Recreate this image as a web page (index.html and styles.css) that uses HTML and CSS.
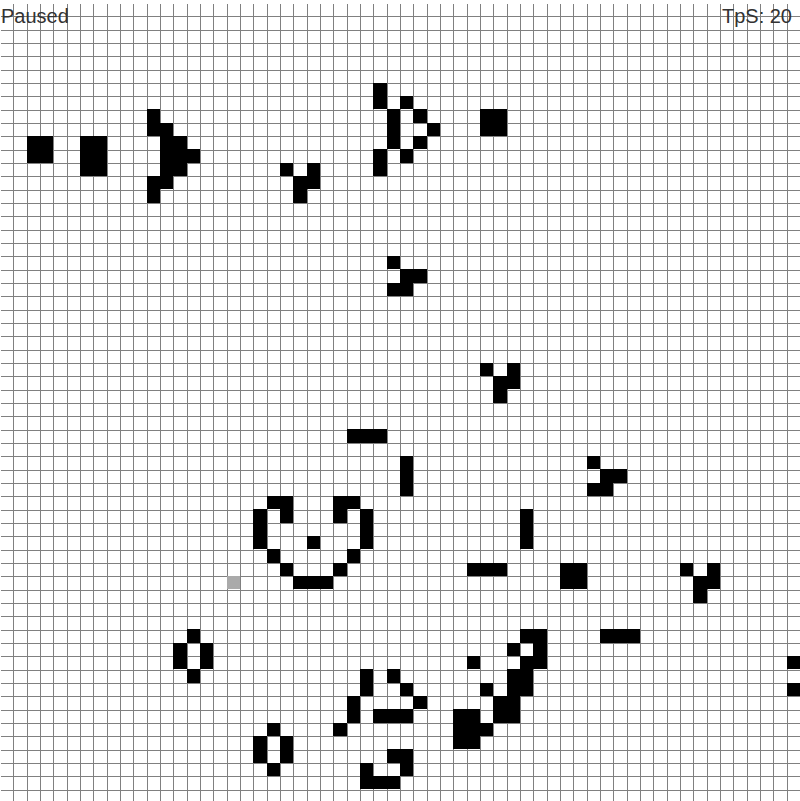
FILE: index.html
```html
<!DOCTYPE html>
<html lang="en">
  <head>
    <meta charset="UTF-8" />
    <meta name="viewport" content="width=device-width, initial-scale=1.0" />
    <title>Game of Life</title>
    <link rel="stylesheet" href="styles.css">
  </head>
  <body>
    <div class="game">
      <div class="hud">
        <span id="status">Paused</span>
        <span id="tps">TpS: 20</span>
      </div>

      <div id="board" class="board">
        <!-- blocks and the ship on the left -->
        <div class="cell" style="grid-area: 11 / 3 / span 2 / span 2"></div>
        <div class="cell" style="grid-area: 11 / 7 / span 3 / span 2"></div>
        <div class="cell" style="grid-area: 9 / 12"></div>
        <div class="cell" style="grid-area: 10 / 12 / span 1 / span 2"></div>
        <div class="cell" style="grid-area: 11 / 13 / span 1 / span 2"></div>
        <div class="cell" style="grid-area: 12 / 13 / span 1 / span 3"></div>
        <div class="cell" style="grid-area: 13 / 13 / span 1 / span 2"></div>
        <div class="cell" style="grid-area: 14 / 12 / span 1 / span 2"></div>
        <div class="cell" style="grid-area: 15 / 12"></div>

        <!-- top middle -->
        <div class="cell" style="grid-area: 7 / 29 / span 2"></div>
        <div class="cell" style="grid-area: 8 / 31"></div>
        <div class="cell" style="grid-area: 9 / 30 / span 3"></div>
        <div class="cell" style="grid-area: 9 / 32"></div>
        <div class="cell" style="grid-area: 10 / 33"></div>
        <div class="cell" style="grid-area: 11 / 32"></div>
        <div class="cell" style="grid-area: 12 / 29 / span 2"></div>
        <div class="cell" style="grid-area: 12 / 31"></div>
        <div class="cell" style="grid-area: 9 / 37 / span 2 / span 2"></div>

        <div class="cell" style="grid-area: 13 / 22"></div>
        <div class="cell" style="grid-area: 13 / 24"></div>
        <div class="cell" style="grid-area: 14 / 23 / span 1 / span 2"></div>
        <div class="cell" style="grid-area: 15 / 23"></div>

        <div class="cell" style="grid-area: 20 / 30"></div>
        <div class="cell" style="grid-area: 21 / 31 / span 1 / span 2"></div>
        <div class="cell" style="grid-area: 22 / 30 / span 1 / span 2"></div>

        <div class="cell" style="grid-area: 28 / 37"></div>
        <div class="cell" style="grid-area: 28 / 39"></div>
        <div class="cell" style="grid-area: 29 / 38 / span 1 / span 2"></div>
        <div class="cell" style="grid-area: 30 / 38"></div>

        <!-- blinkers and gliders in the middle -->
        <div class="cell" style="grid-area: 33 / 27 / span 1 / span 3"></div>
        <div class="cell" style="grid-area: 35 / 31 / span 3"></div>
        <div class="cell" style="grid-area: 35 / 45"></div>
        <div class="cell" style="grid-area: 36 / 46 / span 1 / span 2"></div>
        <div class="cell" style="grid-area: 37 / 45 / span 1 / span 2"></div>

        <!-- the face -->
        <div class="cell" style="grid-area: 38 / 21 / span 1 / span 2"></div>
        <div class="cell" style="grid-area: 38 / 26 / span 1 / span 2"></div>
        <div class="cell" style="grid-area: 39 / 22"></div>
        <div class="cell" style="grid-area: 39 / 26"></div>
        <div class="cell" style="grid-area: 39 / 20 / span 3"></div>
        <div class="cell" style="grid-area: 39 / 28 / span 3"></div>
        <div class="cell" style="grid-area: 41 / 24"></div>
        <div class="cell" style="grid-area: 42 / 21"></div>
        <div class="cell" style="grid-area: 42 / 27"></div>
        <div class="cell" style="grid-area: 43 / 22"></div>
        <div class="cell" style="grid-area: 43 / 26"></div>
        <div class="cell" style="grid-area: 44 / 23 / span 1 / span 3"></div>

        <div class="cell" style="grid-area: 39 / 40 / span 3"></div>
        <div class="cell" style="grid-area: 43 / 36 / span 1 / span 3"></div>
        <div class="cell" style="grid-area: 43 / 43 / span 2 / span 2"></div>
        <div class="cell" style="grid-area: 43 / 52"></div>
        <div class="cell" style="grid-area: 43 / 54"></div>
        <div class="cell" style="grid-area: 44 / 53 / span 1 / span 2"></div>
        <div class="cell" style="grid-area: 45 / 53"></div>

        <!-- mouse hover -->
        <div class="cell hover" style="grid-area: 44 / 18"></div>

        <!-- bottom -->
        <div class="cell" style="grid-area: 48 / 15"></div>
        <div class="cell" style="grid-area: 49 / 14 / span 2"></div>
        <div class="cell" style="grid-area: 49 / 16 / span 2"></div>
        <div class="cell" style="grid-area: 51 / 15"></div>
        <div class="cell" style="grid-area: 48 / 46 / span 1 / span 3"></div>
        <div class="cell" style="grid-area: 50 / 60"></div>
        <div class="cell" style="grid-area: 52 / 60"></div>

        <div class="cell" style="grid-area: 51 / 28 / span 2"></div>
        <div class="cell" style="grid-area: 51 / 30"></div>
        <div class="cell" style="grid-area: 52 / 31"></div>
        <div class="cell" style="grid-area: 53 / 27 / span 2"></div>
        <div class="cell" style="grid-area: 53 / 32"></div>
        <div class="cell" style="grid-area: 54 / 29 / span 1 / span 3"></div>
        <div class="cell" style="grid-area: 55 / 26"></div>

        <div class="cell" style="grid-area: 57 / 30 / span 1 / span 2"></div>
        <div class="cell" style="grid-area: 58 / 31"></div>
        <div class="cell" style="grid-area: 58 / 28 / span 2"></div>
        <div class="cell" style="grid-area: 59 / 29 / span 1 / span 2"></div>

        <div class="cell" style="grid-area: 48 / 40 / span 1 / span 2"></div>
        <div class="cell" style="grid-area: 49 / 39"></div>
        <div class="cell" style="grid-area: 49 / 41"></div>
        <div class="cell" style="grid-area: 50 / 36"></div>
        <div class="cell" style="grid-area: 50 / 40 / span 1 / span 2"></div>
        <div class="cell" style="grid-area: 51 / 39 / span 2 / span 2"></div>
        <div class="cell" style="grid-area: 52 / 37"></div>
        <div class="cell" style="grid-area: 53 / 38 / span 2 / span 2"></div>
        <div class="cell" style="grid-area: 54 / 35 / span 3 / span 2"></div>
        <div class="cell" style="grid-area: 55 / 37"></div>

        <div class="cell" style="grid-area: 55 / 21"></div>
        <div class="cell" style="grid-area: 56 / 20 / span 2"></div>
        <div class="cell" style="grid-area: 56 / 22 / span 2"></div>
        <div class="cell" style="grid-area: 58 / 21"></div>
      </div>
    </div>
  </body>
</html>
```

FILE: styles.css
```css
* {
  box-sizing: border-box;
}

body {
  margin: 0;
  overflow: hidden;
  background: white;
  font-family: "Liberation Sans", Arial, sans-serif;
}

.game {
  position: relative;
  width: 800px;
  height: 801px;
  padding-top: 2.667px;
}

.hud {
  position: absolute;
  top: 0;
  left: 0;
  right: 0;
  z-index: 10;
  display: flex;
  justify-content: space-between;
  padding: 5px 8px 0 1px;
  font-size: 20px;
  line-height: 23px;
  color: #333;
  pointer-events: none;
}

.board {
  display: grid;
  grid-template-columns: repeat(60, 1fr);
  grid-template-rows: repeat(60, 1fr);
  width: 800px;
  height: 800px;
  background:
    linear-gradient(white, white) 0 0 / 1px 100% no-repeat,
    linear-gradient(white, white) 0 0 / 100% 1px no-repeat,
    repeating-linear-gradient(to right, #808080 0 1px, transparent 1px 13.3333px),
    repeating-linear-gradient(to bottom, #808080 0 1px, transparent 1px 13.3333px),
    white;
}

.cell {
  background: black;
}

.cell.hover {
  background: #aaa;
}
```
